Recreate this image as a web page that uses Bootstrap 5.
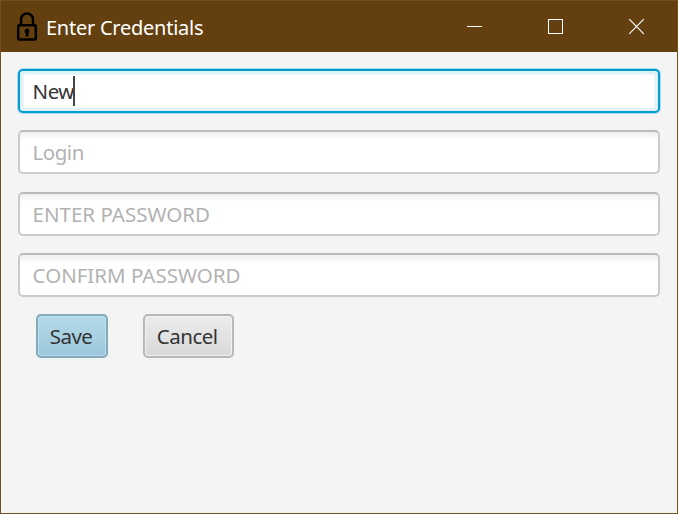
<!DOCTYPE html>
<html lang="en">
<head>
<meta charset="utf-8">
<meta name="viewport" content="width=device-width, initial-scale=1">
<title>Enter Credentials</title>
<link href="https://cdn.jsdelivr.net/npm/bootstrap@5.3.0/dist/css/bootstrap.min.css" rel="stylesheet">
<style>
body{height:514px;overflow:hidden;font-family:"Segoe UI","Noto Sans","Open Sans",sans-serif;background:#f4f4f4}
.window{width:678px;height:514px;border:1px solid #72501f}
.titlebar{height:51px;background:#643f10;color:#fff}
.lock{width:22px;height:29px;margin-left:15px;margin-top:-1px}
.title-text{font-size:20px;line-height:28px;margin-left:8px;margin-top:2px;letter-spacing:-.25px}
.controls{margin-right:-1px}
.control{width:81px;height:51px;border:0;background:none}
.form-area{padding:17px 17px 0;gap:17.25px}
.field{height:44px;border:2px solid #cbcbcb;border-top-color:#bababa;border-radius:5px;padding:0 12.6px;font-size:20.5px;line-height:28px;color:#333;background:linear-gradient(#efefef,#fff 8px);letter-spacing:-.5px}
.field[type=password]{letter-spacing:0}
.field::placeholder{color:#b2b2b2;opacity:1}
.field:focus,.field.active-field{border-color:#049bd0;background:#fff;box-shadow:0 0 0 1px #a9dcec,inset 0 0 0 3.5px #dff2f8}
.caret{position:absolute;left:55px;top:7px;width:2px;height:30px;background:#444}
.actions{gap:34.5px;margin-left:18px}
.action{height:44px;padding:0;font-size:20.5px;line-height:28px;color:#333;border-radius:5px;letter-spacing:-.5px}
.save{width:72px;border:2px solid #83aabb;background:linear-gradient(#b4daea,#9cc7da);box-shadow:inset 0 0 0 1px #bcdfed}
.cancel{width:91.5px;border:2px solid #b8b8b8;background:linear-gradient(#ececec,#d9d9d9);box-shadow:inset 0 0 0 1px #f2f2f2}
.action span{position:relative;left:-1px}
</style>
</head>
<body>
<main class="window d-flex flex-column">
  <header class="titlebar d-flex align-items-center">
    <svg class="lock flex-shrink-0" viewBox="0 0 22 29" fill="none" stroke="#000">
      <path d="M5 13V7.5a6 6 0 0 1 12 0V13" stroke-width="2.5"/>
      <rect x="2.2" y="13.2" width="17.6" height="14.2" rx="1" stroke-width="2.5"/>
      <path d="M11 16.6a2.5 2.5 0 0 1 1.3 4.6l.3 3.3H9.4l.3-3.3A2.5 2.5 0 0 1 11 16.6z" fill="#000" stroke="none"/>
    </svg>
    <span class="title-text" id="title">Enter Credentials</span>
    <div class="controls d-flex ms-auto">
      <button class="control p-0" aria-label="Minimize"><svg class="d-block" width="81" height="51"><path d="M32 25.5h15" stroke="#fff"/></svg></button>
      <button class="control p-0" aria-label="Maximize"><svg class="d-block" width="81" height="51"><rect x="32.5" y="18.5" width="14" height="14" fill="none" stroke="#fff"/></svg></button>
      <button class="control p-0" aria-label="Close"><svg class="d-block" width="81" height="51"><path d="M32.2 18.2l14.6 14.6M46.8 18.2L32.2 32.8" stroke="#fff" stroke-width="1.2"/></svg></button>
    </div>
  </header>
  <form class="form-area d-flex flex-column">
    <div class="position-relative">
      <input class="form-control field active-field" value="New" aria-label="Name">
      <span class="caret"></span>
    </div>
    <input class="form-control field" placeholder="Login" aria-label="Login">
    <input class="form-control field" type="password" placeholder="ENTER PASSWORD" aria-label="Password">
    <input class="form-control field" type="password" placeholder="CONFIRM PASSWORD" aria-label="Confirm password">
    <div class="actions d-flex">
      <button type="button" class="btn action save"><span>Save</span></button>
      <button type="button" class="btn action cancel"><span>Cancel</span></button>
    </div>
  </form>
</main>
<script src="https://cdn.jsdelivr.net/npm/bootstrap@5.3.0/dist/js/bootstrap.bundle.min.js"></script>
</body>
</html>
